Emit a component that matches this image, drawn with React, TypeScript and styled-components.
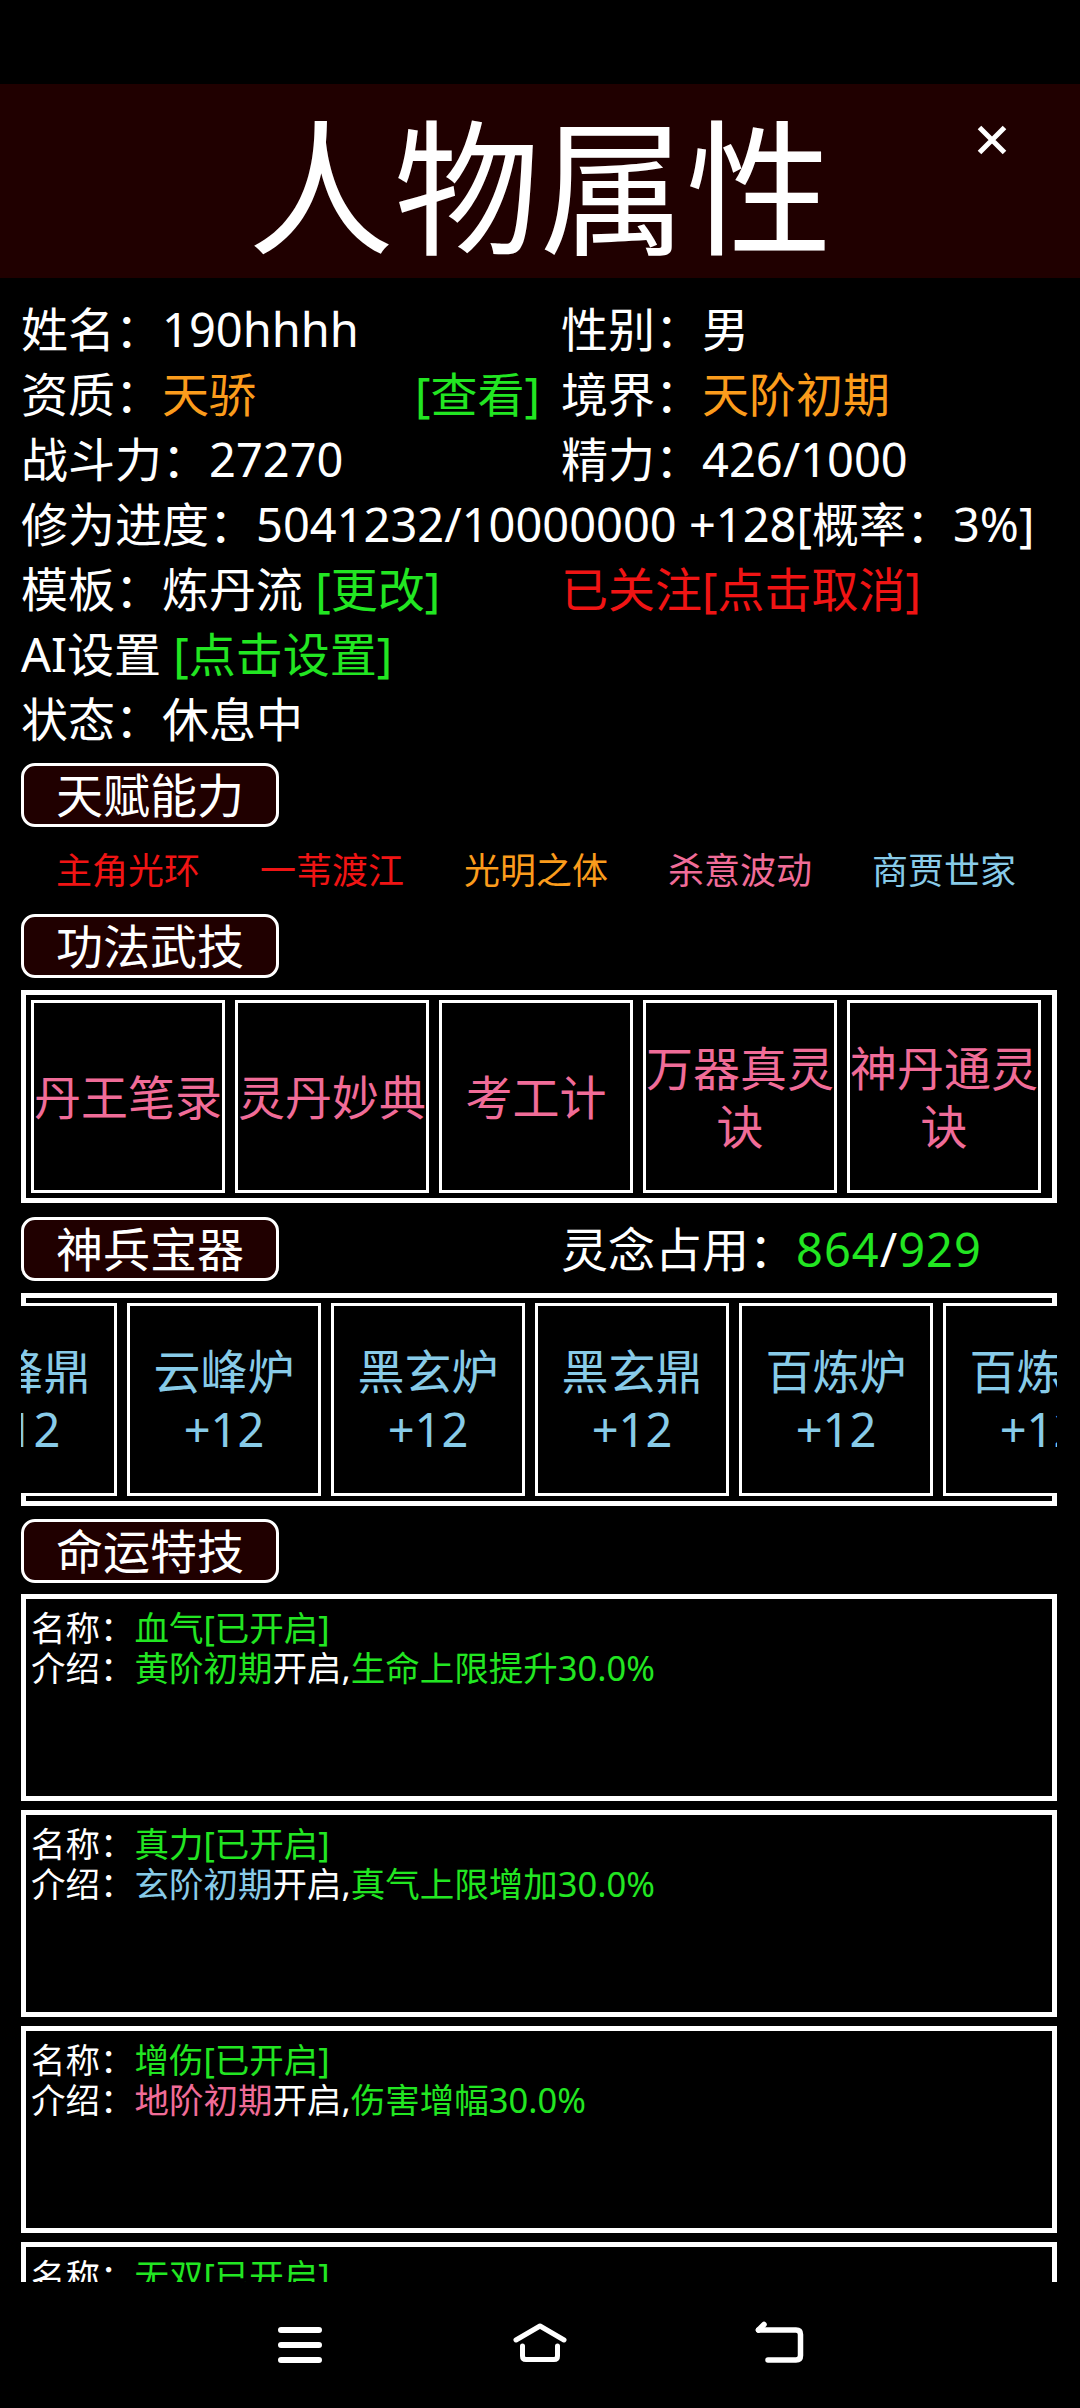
import React, { useLayoutEffect, useRef } from "react";
import styled, { createGlobalStyle } from "styled-components";

const GREEN = "#22e622";
const ORANGE = "#fb9c1c";
const RED = "#f01414";
const PINK = "#f06c98";
const BLUE = "#88cbe8";
const MAROON = "#200000";

const GlobalStyle = createGlobalStyle`
  html, body {
    margin: 0;
    padding: 0;
    background: #000;
  }
  body {
    font-family: "Noto Sans", "Noto Sans CJK SC", sans-serif;
    color: #fff;
  }
`;

const Screen = styled.div`
  width: 1080px;
  height: 2408px;
  display: flex;
  flex-direction: column;
  background: #000;
  overflow: hidden;
`;

const StatusBar = styled.div`
  height: 84px;
  flex: none;
`;

const Header = styled.header`
  position: relative;
  box-sizing: border-box;
  height: 194px;
  padding-top: 12px;
  flex: none;
  background: ${MAROON};
  display: flex;
  align-items: center;
  justify-content: center;
`;

const Title = styled.h1`
  margin: 0;
  font-size: 146px;
  font-weight: 400;
  line-height: 1;
  color: #fff;
`;

const Close = styled.button`
  position: absolute;
  top: 41px;
  right: 73px;
  width: 30px;
  height: 30px;
  padding: 0;
  border: 0;
  background: none;
  display: block;
`;

const Main = styled.main`
  flex: 1;
  min-height: 0;
  overflow: hidden;
  padding: 0 23px 0 21px;
`;

const InfoGrid = styled.div`
  display: grid;
  grid-template-columns: 519px 1fr;
  column-gap: 21px;
  margin-top: 19px;
  font-size: 47px;
  line-height: 65px;
  white-space: nowrap;
`;

const InfoCell = styled.div<{ $span?: boolean }>`
  display: flex;
  justify-content: space-between;
  grid-column: ${(p) => (p.$span ? "1 / -1" : "auto")};
`;

const Hl = styled.span<{ $c: string }>`
  color: ${(p) => p.$c};
`;

const SectionTag = styled.div<{ $mt?: number }>`
  box-sizing: border-box;
  width: 258px;
  height: 64px;
  margin-top: ${(p) => p.$mt ?? 0}px;
  border: 3px solid #fff;
  border-radius: 14px;
  background: ${MAROON};
  font-size: 47px;
  line-height: 58px;
  text-align: center;
`;

const TalentRow = styled.div`
  display: grid;
  grid-template-columns: repeat(5, 204px);
  margin-left: 5px;
  height: 87px;
  font-size: 36px;
  line-height: 87px;
  text-align: center;
  white-space: nowrap;
`;

const Frame = styled.div<{ $mt: number }>`
  box-sizing: border-box;
  width: 1036px;
  margin-top: ${(p) => p.$mt}px;
  border: 5px solid #fff;
  padding: 5px;
`;

const EquipFrame = styled(Frame)`
  padding: 5px 0;
`;

const SlotRow = styled.div`
  display: flex;
  gap: 10px;
`;

const Scroller = styled(SlotRow)`
  margin: 0 -5px;
  padding-left: 10px;
  overflow: hidden;
  background: #000;
`;

const Slot = styled.div<{ $c: string }>`
  box-sizing: border-box;
  flex: none;
  width: 194px;
  height: 193px;
  border: 3px solid #fff;
  display: flex;
  align-items: center;
  justify-content: center;
  text-align: center;
  font-size: 47px;
  line-height: 58px;
  color: ${(p) => p.$c};
  white-space: nowrap;
`;

const SlotText = styled.span<{ $wrap?: boolean }>`
  white-space: ${(p) => (p.$wrap ? "normal" : "nowrap")};
`;

const ToolRow = styled.div`
  display: grid;
  grid-template-columns: 519px 1fr;
  column-gap: 21px;
  align-items: center;
  margin-top: 14px;
`;

const Usage = styled.div`
  font-size: 47px;
  line-height: 64px;
  white-space: nowrap;
`;

const Count = styled.span`
  letter-spacing: 1px;
`;

const Cards = styled.div`
  margin-top: 11px;
`;

const Card = styled.div`
  box-sizing: border-box;
  width: 1036px;
  height: 207px;
  border: 5px solid #fff;
  padding: 9px 5px 0;
  font-size: 34.5px;
  line-height: 40px;
  white-space: nowrap;
  & + & {
    margin-top: 9px;
  }
`;

const NavBar = styled.nav`
  height: 126px;
  flex: none;
  display: grid;
  grid-template-columns: repeat(3, 240px);
  justify-content: center;
  align-items: center;
  justify-items: center;
  background: #000;
`;

const talents = [
  { name: "主角光环", color: RED },
  { name: "一苇渡江", color: RED },
  { name: "光明之体", color: ORANGE },
  { name: "杀意波动", color: PINK },
  { name: "商贾世家", color: BLUE },
];

const skills = ["丹王笔录", "灵丹妙典", "考工计", "万器真灵诀", "神丹通灵诀"];

const equips = ["云峰鼎", "云峰炉", "黑玄炉", "黑玄鼎", "百炼炉", "百炼鼎", "金刚鼎"];

const fates = [
  { name: "血气", stage: "黄阶初期", stageColor: GREEN, effect: "生命上限提升30.0%" },
  { name: "真力", stage: "玄阶初期", stageColor: BLUE, effect: "真气上限增加30.0%" },
  { name: "增伤", stage: "地阶初期", stageColor: PINK, effect: "伤害增幅30.0%" },
  { name: "无双", stage: "天阶初期", stageColor: ORANGE, effect: "暴击伤害提升30.0%" },
];

function CloseIcon() {
  return (
    <svg width="30" height="30" viewBox="0 0 30 30">
      <path d="M2.5 2.5 L27.5 27.5 M27.5 2.5 L2.5 27.5" stroke="#fff" strokeWidth="5" />
    </svg>
  );
}

function MenuIcon() {
  return (
    <svg width="60" height="60" viewBox="0 0 60 60" fill="none" stroke="#fff" strokeWidth="6" strokeLinecap="round">
      <path d="M11 15 H49 M11 30 H49 M11 45 H49" />
    </svg>
  );
}

function HomeIcon() {
  return (
    <svg width="60" height="60" viewBox="0 0 60 60" fill="none" stroke="#fff" strokeWidth="5" strokeLinecap="round" strokeLinejoin="round">
      <path d="M6 25 L30 11 L54 25" />
      <path d="M12.5 31 V41 Q12.5 44.5 16 44.5 H44 Q47.5 44.5 47.5 41 V31" />
    </svg>
  );
}

function BackIcon() {
  return (
    <svg width="60" height="60" viewBox="0 0 60 60" fill="none" stroke="#fff" strokeWidth="5.5" strokeLinecap="round" strokeLinejoin="round">
      <path d="M8.5 15 L14 9.5" />
      <path d="M8.5 15 H46 Q50.5 15 50.5 19.5 V40.5 Q50.5 45 46 45 H18" />
    </svg>
  );
}

export default function App() {
  const scrollRef = useRef<HTMLDivElement>(null);

  useLayoutEffect(() => {
    if (scrollRef.current) scrollRef.current.scrollLeft = 108;
  }, []);

  return (
    <>
      <GlobalStyle />
      <Screen>
        <StatusBar />
        <Header>
          <Title>人物属性</Title>
          <Close aria-label="关闭">
            <CloseIcon />
          </Close>
        </Header>
        <Main>
          <InfoGrid>
            <InfoCell>姓名：190hhhh</InfoCell>
            <InfoCell>性别：男</InfoCell>
            <InfoCell>
              <span>
                资质：<Hl $c={ORANGE}>天骄</Hl>
              </span>
              <Hl $c={GREEN}>[查看]</Hl>
            </InfoCell>
            <InfoCell>
              <span>
                境界：<Hl $c={ORANGE}>天阶初期</Hl>
              </span>
            </InfoCell>
            <InfoCell>战斗力：27270</InfoCell>
            <InfoCell>精力：426/1000</InfoCell>
            <InfoCell $span>修为进度：5041232/10000000 +128[概率：3%]</InfoCell>
            <InfoCell>
              <span>
                模板：炼丹流 <Hl $c={GREEN}>[更改]</Hl>
              </span>
            </InfoCell>
            <InfoCell>
              <Hl $c={RED}>已关注[点击取消]</Hl>
            </InfoCell>
            <InfoCell $span>
              <span>
                AI设置 <Hl $c={GREEN}>[点击设置]</Hl>
              </span>
            </InfoCell>
            <InfoCell $span>状态：休息中</InfoCell>
          </InfoGrid>

          <SectionTag $mt={11}>天赋能力</SectionTag>
          <TalentRow>
            {talents.map((t) => (
              <Hl key={t.name} $c={t.color}>
                {t.name}
              </Hl>
            ))}
          </TalentRow>

          <SectionTag>功法武技</SectionTag>
          <Frame $mt={12}>
            <SlotRow>
              {skills.map((s) => (
                <Slot key={s} $c={PINK}>
                  <SlotText $wrap>{s}</SlotText>
                </Slot>
              ))}
            </SlotRow>
          </Frame>

          <ToolRow>
            <SectionTag>神兵宝器</SectionTag>
            <Usage>
              灵念占用：
              <Count>
                <Hl $c={GREEN}>864</Hl>/<Hl $c={GREEN}>929</Hl>
              </Count>
            </Usage>
          </ToolRow>
          <EquipFrame $mt={12}>
            <Scroller ref={scrollRef}>
              {equips.map((e, i) => (
                <Slot key={e + i} $c={BLUE}>
                  <SlotText>
                    {e}
                    <br />
                    +12
                  </SlotText>
                </Slot>
              ))}
            </Scroller>
          </EquipFrame>

          <SectionTag $mt={13}>命运特技</SectionTag>
          <Cards>
            {fates.map((f) => (
              <Card key={f.name}>
                <div>
                  名称：<Hl $c={GREEN}>{f.name}[已开启]</Hl>
                </div>
                <div>
                  介绍：<Hl $c={f.stageColor}>{f.stage}</Hl>开启,<Hl $c={GREEN}>{f.effect}</Hl>
                </div>
              </Card>
            ))}
          </Cards>
        </Main>
        <NavBar>
          <MenuIcon />
          <HomeIcon />
          <BackIcon />
        </NavBar>
      </Screen>
    </>
  );
}
